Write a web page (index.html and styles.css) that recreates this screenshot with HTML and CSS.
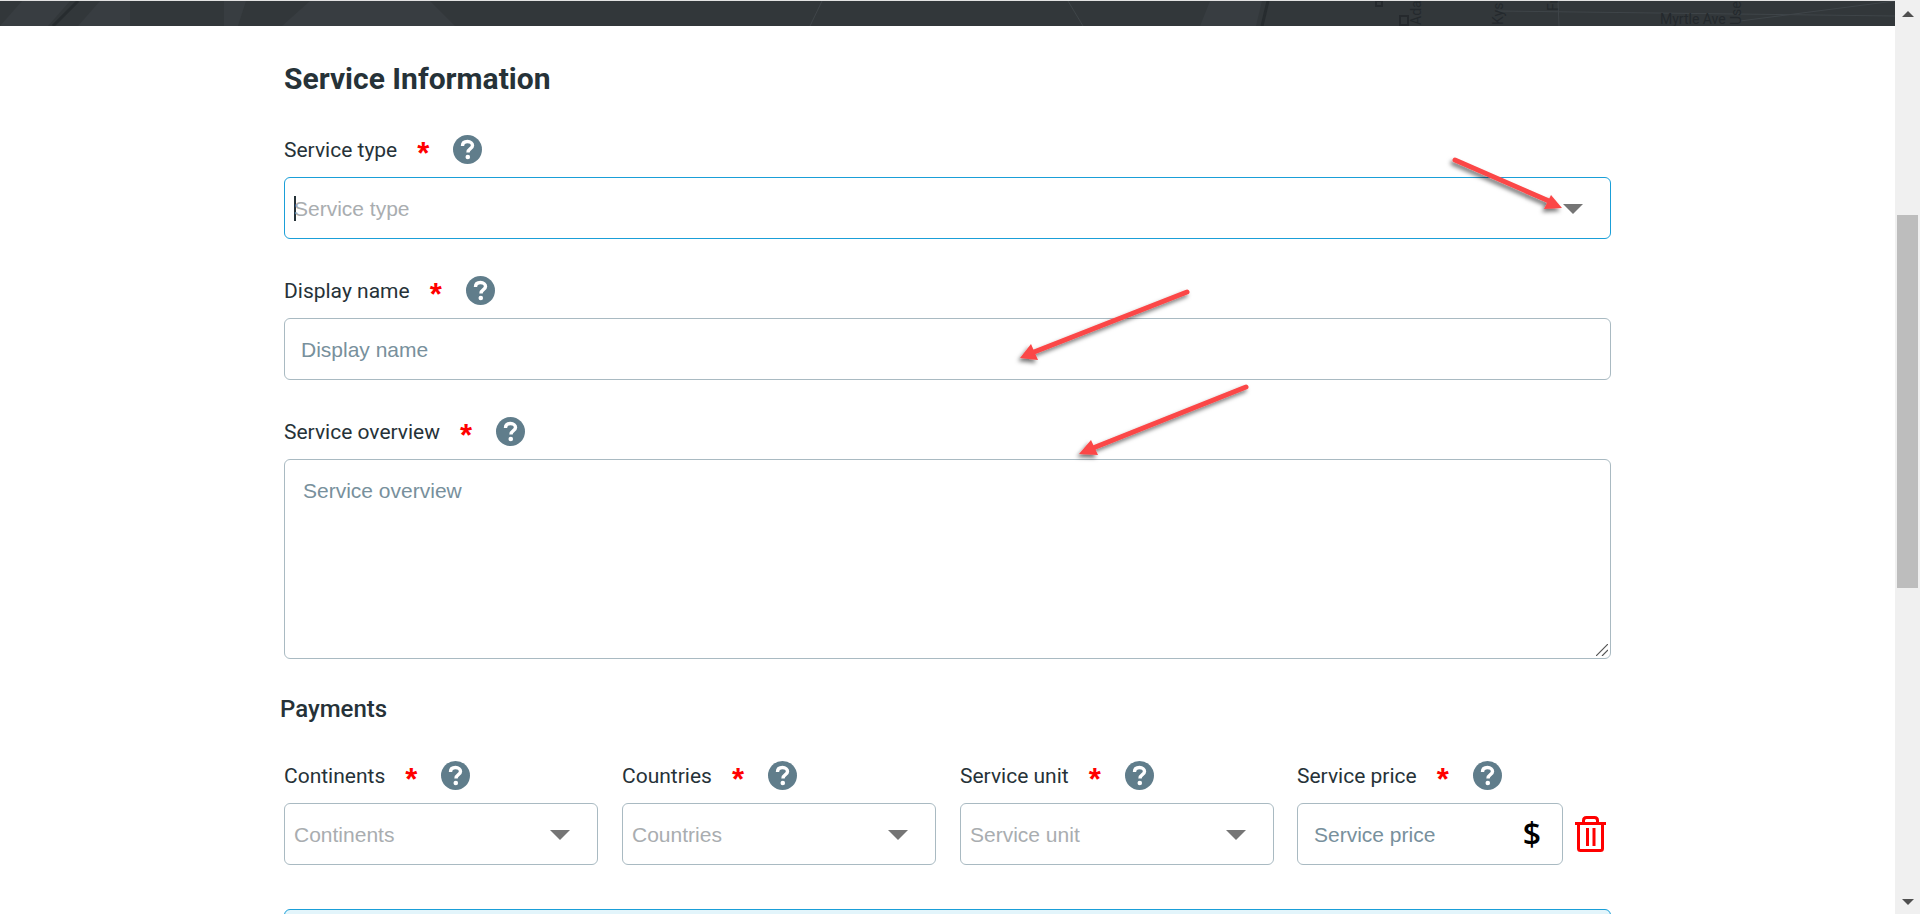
FILE: index.html
```html
<!DOCTYPE html>
<html lang="en">
<head>
<meta charset="utf-8">
<title>Service Information</title>
<link rel="stylesheet" href="styles.css">
</head>
<body>
<svg class="defs" width="0" height="0">
  <symbol id="help" viewBox="0 0 29 29">
    <circle class="help-disc" cx="14.500" cy="14.500" r="14.500"/>
    <path class="help-mark" d="M9.500 11 C9.500 7.500 12 6.500 14.500 6.500 C17.500 6.500 19.500 8.500 19.500 10.500 C19.500 14 15 13.500 15 17.500"/>
    <circle class="help-dot" cx="14.800" cy="22" r="2.300"/>
  </symbol>
</svg>
<div class="viewport">
  <div class="page">
    <div class="banner">
      <svg class="map" width="1895" height="25" viewBox="0 0 1895 25">
        <g class="patches">
          <path d="M0 25 L22 0 H70 L48 25 Z"/>
          <path d="M78 25 L100 0 H130 L130 25 Z"/>
          <path d="M224 0 H246 L238 25 H224 Z"/>
          <path d="M282 25 L310 0 H430 L455 25 Z"/>
          <path d="M1200 25 L1210 0 H1262 L1256 25 Z"/>
        </g>
        <g class="roads">
          <path d="M1068 0 L1083 25"/>
          <path d="M810 25 L822 0"/>
          <path d="M1498 10 L1895 15"/>
          <path d="M1558 0 L1559 25"/>
          <path d="M1740 20 L1895 0"/>
        </g>
        <g class="dark-roads">
          <path d="M53 25 L78 0"/>
          <path d="M1262 25 L1268 0"/>
        </g>
        <rect class="map-mark" x="1376" y="0" width="6" height="5"/>
        <rect class="map-mark" x="1400" y="15" width="8" height="9"/>
        <text class="map-label" x="1660" y="23">Myrtle Ave</text>
        <text class="map-label" transform="translate(1421 24) rotate(-90)">Ada</text>
        <text class="map-label" transform="translate(1503 24) rotate(-90)">Kys</text>
        <text class="map-label" transform="translate(1558 10) rotate(-90)">Fr</text>
        <text class="map-label" transform="translate(1741 24) rotate(-90)">Use</text>
      </svg>
    </div>
    <main class="content">
      <h1 class="title">Service Information</h1>

      <div class="field">
        <div class="label"><span>Service type</span><span class="req">*</span><svg class="help" width="29" height="29"><use href="#help"/></svg></div>
        <div class="control focus">
          <span class="caret"></span><span class="ph-select">Service type</span>
          <span class="tri"></span>
        </div>
      </div>

      <div class="field">
        <div class="label"><span>Display name</span><span class="req">*</span><svg class="help" width="29" height="29"><use href="#help"/></svg></div>
        <div class="control"><span class="ph">Display name</span></div>
      </div>

      <div class="field">
        <div class="label"><span>Service overview</span><span class="req">*</span><svg class="help" width="29" height="29"><use href="#help"/></svg></div>
        <div class="control area">
          <span class="ph">Service overview</span>
          <svg class="grip" width="12" height="12" viewBox="0 0 12 12"><path d="M0 12 L12 0 M6 12 L12 6"/></svg>
        </div>
      </div>

      <h2 class="subtitle">Payments</h2>

      <div class="row">
        <div class="col">
          <div class="label"><span>Continents</span><span class="req">*</span><svg class="help" width="29" height="29"><use href="#help"/></svg></div>
          <div class="control select"><span class="ph-select">Continents</span><span class="tri"></span></div>
        </div>
        <div class="col">
          <div class="label"><span>Countries</span><span class="req">*</span><svg class="help" width="29" height="29"><use href="#help"/></svg></div>
          <div class="control select"><span class="ph-select">Countries</span><span class="tri"></span></div>
        </div>
        <div class="col">
          <div class="label"><span>Service unit</span><span class="req">*</span><svg class="help" width="29" height="29"><use href="#help"/></svg></div>
          <div class="control select"><span class="ph-select">Service unit</span><span class="tri"></span></div>
        </div>
        <div class="col price">
          <div class="label"><span>Service price</span><span class="req">*</span><svg class="help" width="29" height="29"><use href="#help"/></svg></div>
          <div class="price-line">
            <div class="control price-box"><span class="ph">Service price</span><span class="dollar">$</span></div>
            <svg class="trash" width="31" height="36" viewBox="0 0 31 36">
              <path d="M0 7.500 H31 M3.500 8 V32.500 Q3.500 34.500 5.500 34.500 H25.500 Q27.500 34.500 27.500 32.500 V8 M8.500 7 V4.500 Q8.500 1.500 11.500 1.500 H19.500 Q22.500 1.500 22.500 4.500 V7 M12.500 12 V30 M19 12 V30"/>
            </svg>
          </div>
        </div>
      </div>

      <div class="next-box"></div>
    </main>
  </div>
  <aside class="scrollbar">
    <span class="sb-up"></span>
    <div class="sb-track"><div class="sb-thumb"></div></div>
    <span class="sb-down"></span>
  </aside>

  <svg class="arrows" width="1895" height="914" viewBox="0 0 1895 914">
    <defs>
      <filter id="shadow" x="-20%" y="-20%" width="140%" height="140%">
        <feDropShadow dx="-2" dy="3" stdDeviation="2" flood-color="#000" flood-opacity=".55"/>
      </filter>
    </defs>
    <g class="arrow" filter="url(#shadow)">
      <path class="shaft" d="M1455 160 L1549 201"/>
      <path class="head" d="M1562 208 L1551 195 L1544 209 Z"/>
    </g>
    <g class="arrow" filter="url(#shadow)">
      <path class="shaft" d="M1187 292 L1034 352"/>
      <path class="head" d="M1020 358 L1031 344 L1038 360 Z"/>
    </g>
    <g class="arrow" filter="url(#shadow)">
      <path class="shaft" d="M1246 387 L1093 448"/>
      <path class="head" d="M1079 454 L1091 440 L1098 455 Z"/>
    </g>
  </svg>
</div>
</body>
</html>
```

FILE: styles.css
```css
* { box-sizing: border-box; }
html, body { margin: 0; height: 100%; overflow: hidden; background: #fff; }
body { font-family: Roboto, "Liberation Sans", sans-serif; color: #263238; }

.defs { position: absolute; }
.viewport { position: relative; display: flex; width: 1920px; height: 914px; overflow: hidden; }
.page { flex: 1 1 auto; min-width: 0; }

.banner { height: 26px; border-top: 1px solid #e2e2e2; background: #32373a; overflow: hidden; }
.map { display: block; }
.patches path { fill: #383d41; }
.roads path { fill: none; stroke: #3f4549; stroke-width: 1; }
.dark-roads path { fill: none; stroke: #272c2f; stroke-width: 3; }
.map-mark { fill: none; stroke: #25292d; stroke-width: 2; }
.map-label { font: 14px Roboto, sans-serif; fill: #24292d; }

.content { padding: 0 0 0 284px; width: 1611px; }
.title { margin: 35px 0 38px; font-size: 30px; line-height: 36px; font-weight: 700; color: #263238; }

.field { margin-bottom: 37px; }
.label { display: flex; align-items: center; height: 29px; font-size: 21px; color: #263238; }
.req { margin-left: 20px; width: 11px; color: #f00; font-family: "Liberation Sans", sans-serif; font-size: 31px; font-weight: 700; line-height: 29px; padding-top: 7px; }
.help { margin-left: 25px; flex: none; }
.help-disc { fill: #607d8b; }
.help-mark { fill: none; stroke: #fff; stroke-width: 3.400; }
.help-dot { fill: #fff; }

.control { position: relative; display: flex; align-items: center; height: 62px; margin-top: 13px; padding-top: 1px; border: 1px solid #a9bac2; border-radius: 6px; background: #fff; font-family: "Liberation Sans", sans-serif; font-size: 21px; }
.focus { border-color: #1a9fd8; }
.ph { padding-left: 16px; color: #78909c; }
.ph-select { color: #a9adb0; }
.select .ph-select { padding-left: 9px; }
.caret { width: 2px; height: 25px; margin-left: 9px; margin-right: -2px; background: #263238; }
.tri { position: absolute; right: 27px; top: 26px; border-left: 10px solid transparent; border-right: 10px solid transparent; border-top: 10px solid #757575; }

.area { display: block; height: 200px; padding-top: 19px; }
.area .ph { padding-left: 18px; line-height: 24px; }
.grip { position: absolute; right: 2px; bottom: 2px; }
.grip path { stroke: #555; stroke-width: 1.200; fill: none; }

.subtitle { margin: 0 0 39px -4px; font-size: 24px; line-height: 26px; font-weight: 500; color: #263238; }

.row { display: flex; gap: 24px; }
.col { width: 314px; }
.price { width: auto; margin-left: -1px; }
.price-line { display: flex; align-items: center; margin-top: 13px; }
.price-line .control { margin-top: 0; }
.price-box { width: 266px; }
.dollar { position: absolute; right: 21px; top: 11px; color: #000; font-family: "Open Sans", sans-serif; font-size: 32px; line-height: 38px; font-weight: 600; }
.trash { margin-left: 12px; flex: none; }
.trash path { fill: none; stroke: #f00; stroke-width: 3; }

.next-box { height: 40px; margin-top: 44px; border: 1px solid #1a9fd8; border-radius: 6px; background: #e3f5fb; }

.scrollbar { flex: 0 0 25px; display: flex; flex-direction: column; align-items: center; background: #f0f0f0; }
.sb-track { flex: 1 1 auto; width: 100%; padding: 0 2px; }
.sb-thumb { height: 373px; margin-top: 198px; background: #bdbdbd; }
.sb-up { margin-top: 11px; border-left: 6px solid transparent; border-right: 6px solid transparent; border-bottom: 6px solid #505050; }
.sb-down { margin-bottom: 9px; border-left: 6px solid transparent; border-right: 6px solid transparent; border-top: 6px solid #505050; }

.arrows { position: absolute; left: 0; top: 0; pointer-events: none; }
.shaft { fill: none; stroke: #fb4747; stroke-width: 5; stroke-linecap: round; }
.head { fill: #fb4747; }
```
